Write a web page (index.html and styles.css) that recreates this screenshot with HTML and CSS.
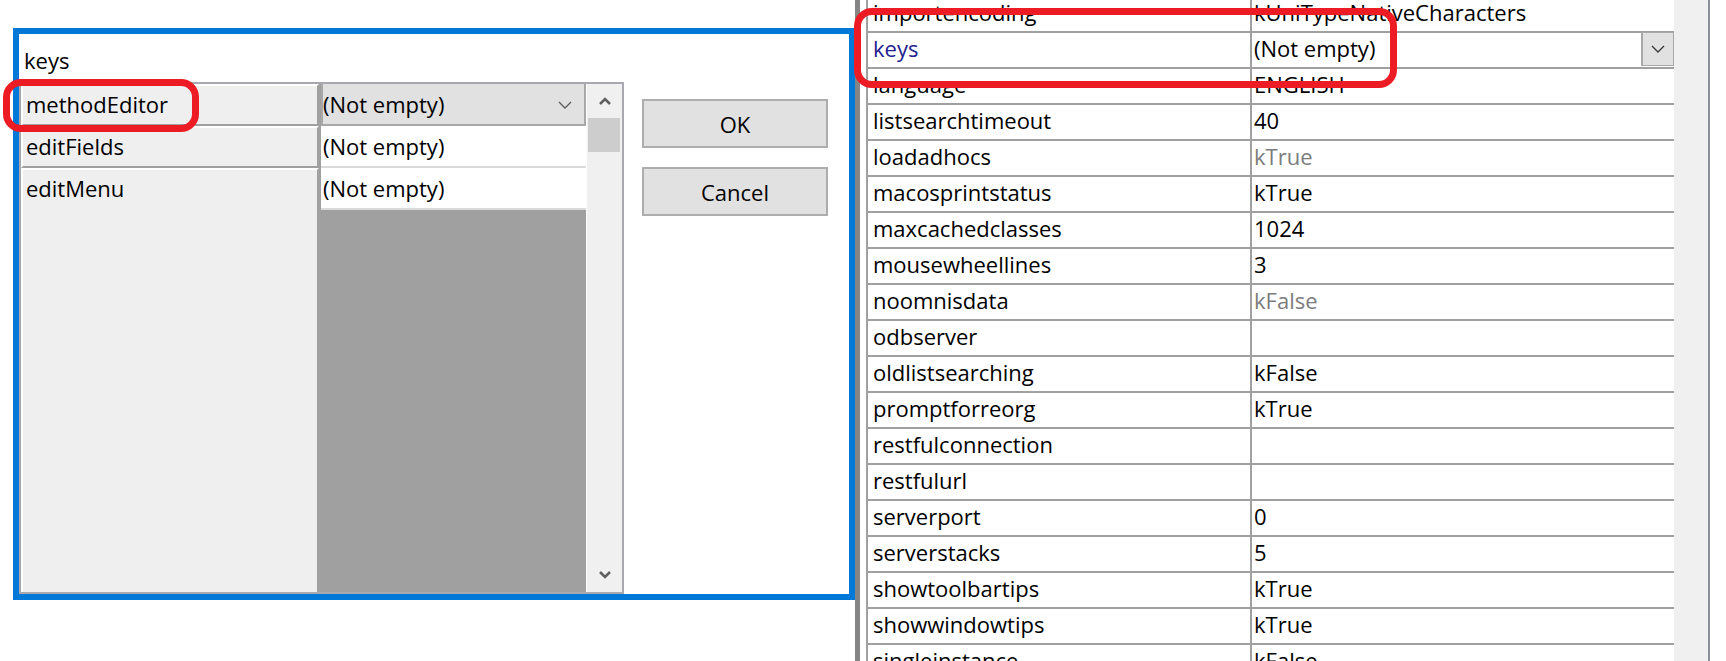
FILE: index.html
```html
<!DOCTYPE html>
<html lang="en">
<head>
<meta charset="utf-8">
<title>keys</title>
<link rel="stylesheet" href="styles.css">
</head>
<body>
<div class="screen">
  <div class="left">
    <div class="dialog">
      <div class="dlg-title">keys</div>
      <div class="dlg-body">
        <div class="grid">
          <div class="names">
            <div class="ncell">methodEditor</div>
            <div class="ncell">editFields</div>
            <div class="ncell ncell-fill">editMenu</div>
          </div>
          <div class="values">
            <div class="vcell combo">
              <span class="combo-text">(Not empty)</span>
              <svg class="combo-chev" width="14" height="8" viewBox="0 0 14 8"><path d="M1 1 L7 7 L13 1" fill="none" stroke="#5a5a5a" stroke-width="1.3"/></svg>
            </div>
            <div class="vcell">(Not empty)</div>
            <div class="vcell">(Not empty)</div>
          </div>
          <div class="vscroll">
            <div class="sb-arrow">
              <svg width="12" height="8" viewBox="0 0 12 8"><path d="M1 7 L6 2 L11 7" fill="none" stroke="#606060" stroke-width="2.6"/></svg>
            </div>
            <div class="sb-thumb"></div>
            <div class="sb-track"></div>
            <div class="sb-arrow">
              <svg width="12" height="8" viewBox="0 0 12 8"><path d="M1 1 L6 6 L11 1" fill="none" stroke="#606060" stroke-width="2.6"/></svg>
            </div>
          </div>
        </div>
        <div class="buttons">
          <div class="btn">OK</div>
          <div class="btn">Cancel</div>
        </div>
      </div>
    </div>
  </div>
  <div class="right">
    <div class="pgrid">
      <div class="prow"><div class="pname">importencoding</div><div class="pval">kUniTypeNativeCharacters</div></div>
      <div class="prow"><div class="pname pname-sel">keys</div><div class="pval pval-combo"><span class="pval-text">(Not empty)</span><span class="ddbtn"><svg width="14" height="8" viewBox="0 0 14 8"><path d="M1 1 L7 7 L13 1" fill="none" stroke="#3c3c3c" stroke-width="1.4"/></svg></span></div></div>
      <div class="prow"><div class="pname">language</div><div class="pval">ENGLISH</div></div>
      <div class="prow"><div class="pname">listsearchtimeout</div><div class="pval">40</div></div>
      <div class="prow"><div class="pname">loadadhocs</div><div class="pval pval-dim">kTrue</div></div>
      <div class="prow"><div class="pname">macosprintstatus</div><div class="pval">kTrue</div></div>
      <div class="prow"><div class="pname">maxcachedclasses</div><div class="pval">1024</div></div>
      <div class="prow"><div class="pname">mousewheellines</div><div class="pval">3</div></div>
      <div class="prow"><div class="pname">noomnisdata</div><div class="pval pval-dim">kFalse</div></div>
      <div class="prow"><div class="pname">odbserver</div><div class="pval"></div></div>
      <div class="prow"><div class="pname">oldlistsearching</div><div class="pval">kFalse</div></div>
      <div class="prow"><div class="pname">promptforreorg</div><div class="pval">kTrue</div></div>
      <div class="prow"><div class="pname">restfulconnection</div><div class="pval"></div></div>
      <div class="prow"><div class="pname">restfulurl</div><div class="pval"></div></div>
      <div class="prow"><div class="pname">serverport</div><div class="pval">0</div></div>
      <div class="prow"><div class="pname">serverstacks</div><div class="pval">5</div></div>
      <div class="prow"><div class="pname">showtoolbartips</div><div class="pval">kTrue</div></div>
      <div class="prow"><div class="pname">showwindowtips</div><div class="pval">kTrue</div></div>
      <div class="prow"><div class="pname">singleinstance</div><div class="pval">kFalse</div></div>
    </div>
    <div class="pscroll"></div>
  </div>
</div>
<div class="mark mark-left"></div>
<div class="mark mark-right"></div>
</body>
</html>
```

FILE: styles.css
```css
* {
  box-sizing: border-box;
}

html, body {
  margin: 0;
  padding: 0;
  background: #ffffff;
}

body {
  font-family: "Open Sans", "Noto Sans", "Liberation Sans", sans-serif;
  font-size: 22px;
  color: #000000;
  position: relative;
  width: 1726px;
  height: 661px;
  overflow: hidden;
}

.screen {
  display: flex;
  height: 661px;
  overflow: hidden;
}

/* ---------- left dialog ---------- */
.left {
  width: 855px;
  flex: none;
}

.dialog {
  margin: 28px 0 0 13px;
  width: 842px;
  height: 572px;
  border: 6px solid #0078d7;
  background: #ffffff;
  display: flex;
  flex-direction: column;
}

.dlg-title {
  height: 48px;
  padding: 2px 0 0 5px;
  line-height: 48px;
}

.dlg-body {
  flex: 1;
  display: flex;
  align-items: flex-start;
}

.grid {
  width: 605px;
  height: 512px;
  border: 2px solid #a8a8ae;
  display: flex;
}

.names {
  width: 298px;
  display: flex;
  flex-direction: column;
  background: #a0a0a0;
}

.ncell {
  height: 42px;
  background: #efefef;
  border-top: 2px solid #ffffff;
  border-left: 2px solid #ffffff;
  border-right: 2px solid #a0a0a0;
  border-bottom: 2px solid #a0a0a0;
  padding-left: 3px;
  line-height: 37px;
}

.ncell-fill {
  flex: 1;
  border-bottom: none;
}

.values {
  width: 268px;
  background: #a0a0a0;
  border-right: 1px solid #ffffff;
  display: flex;
  flex-direction: column;
  padding-left: 2px;
}

.vcell {
  height: 42px;
  background: #ffffff;
  border-bottom: 2px solid #dadada;
  padding-left: 2px;
  line-height: 37px;
  padding-top: 2px;
}

.combo {
  display: flex;
  align-items: flex-start;
  background: #e1e1e1;
  border: 2px solid #a8a8a8;
  border-top: none;
  padding: 2px 0 0 0;
  height: 42px;
}

.combo-text {
  flex: 1;
  line-height: 37px;
}

.combo-chev {
  margin: 15px 12px 0 0;
}

.vscroll {
  width: 35px;
  background: #f0f0f0;
  display: flex;
  flex-direction: column;
}

.sb-arrow {
  height: 34px;
  display: flex;
  align-items: center;
  justify-content: center;
  padding-left: 1px;
}

.sb-thumb {
  height: 34px;
  margin: 0 2px 0 1px;
  background: #cdcdcd;
}

.sb-track {
  flex: 1;
}

.buttons {
  margin: 17px 0 0 18px;
  display: flex;
  flex-direction: column;
  gap: 19px;
}

.btn {
  width: 186px;
  height: 49px;
  background: #e1e1e1;
  border: 2px solid #adadad;
  display: flex;
  align-items: center;
  justify-content: center;
}

/* ---------- right property panel ---------- */
.right {
  flex: 1;
  display: flex;
  border-left: 5px solid #858585;
  padding-left: 6px;
}

.pgrid {
  width: 808px;
  margin-top: -3px;
  border-left: 2px solid #a0a0a0;
  align-self: flex-start;
}

.prow {
  display: flex;
  height: 36px;
  border-bottom: 2px solid #a0a0a0;
}

.pname {
  width: 384px;
  border-right: 2px solid #a0a0a0;
  padding-left: 5px;
  line-height: 31px;
  white-space: nowrap;
}

.pname-sel {
  color: #24208f;
}

.pval {
  flex: 1;
  padding-left: 2px;
  line-height: 31px;
  white-space: nowrap;
}

.pval-dim {
  color: #7c7c7c;
}

.pval-combo {
  display: flex;
}

.pval-text {
  flex: 1;
}

.ddbtn {
  width: 33px;
  height: 34px;
  margin-top: -1px;
  background: #e1e1e1;
  border: 1px solid #a8a8a8;
  border-left: 2px solid #a8a8a8;
  display: flex;
  align-items: center;
  justify-content: center;
}

.pscroll {
  width: 36px;
  background: #f0f0f0;
  border-right: 2px solid #8a8f98;
}

/* ---------- red annotation marks ---------- */
.mark {
  position: absolute;
  border: 7px solid #ed1c24;
  border-radius: 18px;
}

.mark-left {
  left: 3px;
  top: 79px;
  width: 196px;
  height: 53px;
}

.mark-right {
  left: 854px;
  top: 8px;
  width: 543px;
  height: 80px;
}
```
